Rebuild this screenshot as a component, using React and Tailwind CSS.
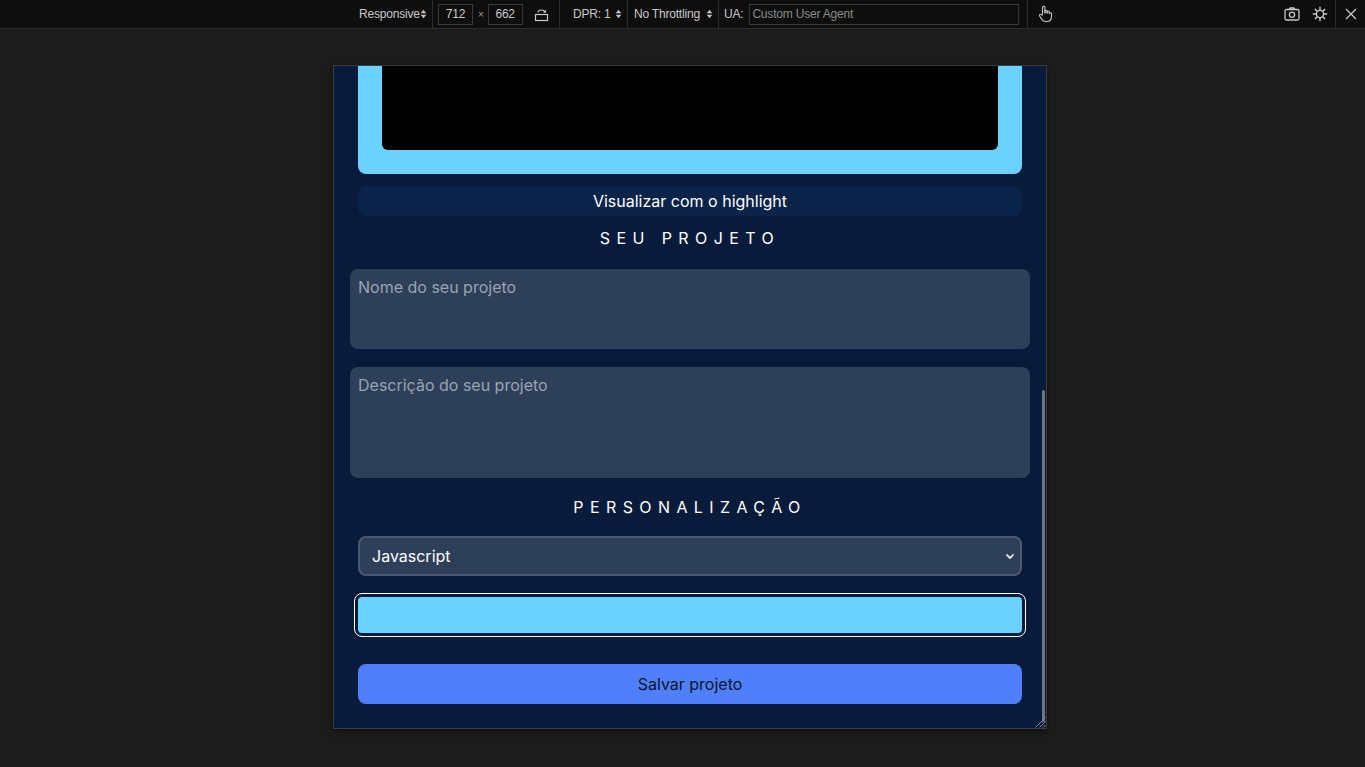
import React from "react";

const UpDown = () => (
  <svg width="7" height="10" viewBox="0 0 7 10" className="shrink-0">
    <path d="M3.5 0.8L6.3 4.2H0.7Z" fill="#c4c4c4" />
    <path d="M3.5 9.2L0.7 5.8H6.3Z" fill="#c4c4c4" />
  </svg>
);

const Sep = () => <div className="w-px h-[28px] bg-[#2e2e2e] shrink-0" />;

function Toolbar() {
  return (
    <div
      className="h-[29px] bg-[#0e0e0e] border-b border-[#2c2c2c] flex items-center text-[12px] tracking-[-0.2px] text-[#c8c8c8] shrink-0"
      style={{ fontFamily: '"Liberation Sans", Arial, sans-serif' }}
    >
      <div className="w-[432px] pl-[359px] pr-[6px] flex items-center justify-between">
        <span>Responsive</span>
        <UpDown />
      </div>
      <Sep />
      <div className="w-[126px] flex items-center">
        <div className="ml-[5px] w-[35px] h-[21px] border border-[#3a3a3a] flex items-center justify-center">712</div>
        <span className="ml-[5px] text-[10px] text-[#9a9a9a]">×</span>
        <div className="ml-[4px] w-[35px] h-[21px] border border-[#3a3a3a] flex items-center justify-center">662</div>
        <svg width="15" height="15" viewBox="0 0 15 15" className="ml-[11px]" fill="none" stroke="#c8c8c8" strokeWidth="1.2">
          <rect x="1.5" y="7.5" width="12" height="6" />
          <path d="M4 5.5 C4 2.5 10 2 11 5" />
          <path d="M9.5 4.6 L11.2 5.3 L11.8 3.4" />
        </svg>
      </div>
      <Sep />
      <div className="w-[67px] pl-[13px] pr-[5px] flex items-center justify-between">
        <span>DPR: 1</span>
        <UpDown />
      </div>
      <Sep />
      <div className="w-[90px] pl-[6px] pr-[5px] flex items-center justify-between">
        <span>No Throttling</span>
        <UpDown />
      </div>
      <Sep />
      <div className="w-[308px] pl-[5px] flex items-center">
        <span>UA:</span>
        <div className="ml-[6px] w-[270px] h-[21px] border border-[#3a3a3a] flex items-center pl-[2px] text-[#8a8a8a]">
          Custom User Agent
        </div>
      </div>
      <Sep />
      <svg width="16" height="18" viewBox="0 0 16 18" className="ml-[9px]" fill="none" stroke="#c8c8c8" strokeWidth="1.1" strokeLinejoin="round">
        <path d="M5.5 9.5V2.6a1.2 1.2 0 0 1 2.4 0V8.5" />
        <path d="M7.9 8V6.4a1.1 1.1 0 0 1 2.2 0V8.4" />
        <path d="M10.1 8.2V7.1a1.1 1.1 0 0 1 2.2 0V9" />
        <path d="M12.3 8.8a1.1 1.1 0 0 1 2.2 0v2.7c0 3-1.7 5-4.5 5H8.6c-1.6 0-2.6-0.7-3.5-1.9L2.6 11a1.2 1.2 0 0 1 1.9-1.4l1 1.1" />
      </svg>
      <div className="flex-1" />
      <svg width="16" height="14" viewBox="0 0 16 14" fill="none" stroke="#c8c8c8" strokeWidth="1.3">
        <rect x="1" y="2.5" width="14" height="10.5" rx="1.5" />
        <path d="M5 2.5 L6 1 H10 L11 2.5" />
        <circle cx="8" cy="7.7" r="2.6" />
      </svg>
      <svg width="16" height="16" viewBox="0 0 16 16" className="ml-[12px]" fill="none" stroke="#c8c8c8" strokeWidth="1.4">
        <circle cx="8" cy="8" r="3.6" />
        <path d="M8 0.8V4.4M8 11.6V15.2M0.8 8H4.4M11.6 8H15.2M2.9 2.9L5.4 5.4M10.6 10.6L13.1 13.1M13.1 2.9L10.6 5.4M5.4 10.6L2.9 13.1" />
      </svg>
      <div className="ml-[7px]"><Sep /></div>
      <svg width="12" height="12" viewBox="0 0 12 12" className="ml-[9px] mr-[8px]" fill="none" stroke="#c8c8c8" strokeWidth="1.3">
        <path d="M1 1L11 11M11 1L1 11" />
      </svg>
    </div>
  );
}

function Page() {
  return (
    <div
      className="w-[712px] h-[662px] bg-[#081b3a] overflow-hidden flex flex-col justify-end relative text-white"
      style={{ fontFamily: 'Inter, "Noto Sans", sans-serif' }}
    >
      <div className="px-6 shrink-0">
        <div className="bg-[#6bd1ff] rounded-lg p-6 h-[300px] flex flex-col">
          <div className="bg-black rounded-md flex-1" />
        </div>
      </div>
      <div className="px-6 mt-3 shrink-0">
        <div className="h-[30px] bg-[#0a2349] rounded-lg flex items-center justify-center text-base leading-6">
          Visualizar com o highlight
        </div>
      </div>
      <div className="mt-[10px] h-6 shrink-0 text-center text-base leading-6 tracking-[0.4em]">
        SEU PROJETO
      </div>
      <div className="px-4 shrink-0 flex flex-col">
        <div className="mt-[19px] h-[80px] bg-[#2e4059] rounded-lg pl-2 pt-[6px] text-base leading-6 text-[#9aa3b2]">
          Nome do seu projeto
        </div>
        <div className="mt-[18px] h-[111px] bg-[#2e4059] rounded-lg pl-2 pt-[6px] text-base leading-6 text-[#9aa3b2]">
          Descrição do seu projeto
        </div>
      </div>
      <div className="mt-[17px] h-6 shrink-0 text-center text-base leading-6 tracking-[0.4em]">
        PERSONALIZAÇÃO
      </div>
      <div className="px-6 shrink-0 flex flex-col">
        <div className="mt-[17px] h-10 bg-[#2e4059] border-2 border-[#4b5a70] rounded-lg flex items-center pl-3 pr-[4px] text-base">
          <span className="flex-1">Javascript</span>
          <svg width="12" height="12" viewBox="0 0 12 12" fill="none" stroke="#ffffff" strokeWidth="1.7">
            <path d="M2.5 4.5L6 8L9.5 4.5" />
          </svg>
        </div>
        <div className="mt-[21px] h-[36px] bg-[#6bd1ff] rounded-[4px] outline-[1.5px] outline-white outline-offset-[3px]" />
        <div className="mt-[31px] h-10 bg-[#507ffb] rounded-lg flex items-center justify-center text-base text-[#0b1526]">
          Salvar projeto
        </div>
      </div>
      <div className="h-[24px] shrink-0" />
      <div className="absolute right-[1px] top-[324px] h-[332px] w-[3px] bg-[#6b7585] rounded-full" />
      <svg width="12" height="12" viewBox="0 0 12 12" className="absolute right-0 bottom-0" stroke="#8a8f98" strokeWidth="1">
        <path d="M11.5 1.5L1.5 11.5M11.5 5.5L5.5 11.5M11.5 9L9 11.5" />
      </svg>
    </div>
  );
}

export default function App() {
  return (
    <div className="w-[1365px] h-[767px] bg-[#1c1c1c] flex flex-col overflow-hidden">
      <Toolbar />
      <div className="pt-[36px] pl-[333px]">
        <div className="w-[714px] h-[664px] border border-[#3c3c3c] shadow-[0_2px_6px_rgba(0,0,0,0.55)]">
          <Page />
        </div>
      </div>
    </div>
  );
}
